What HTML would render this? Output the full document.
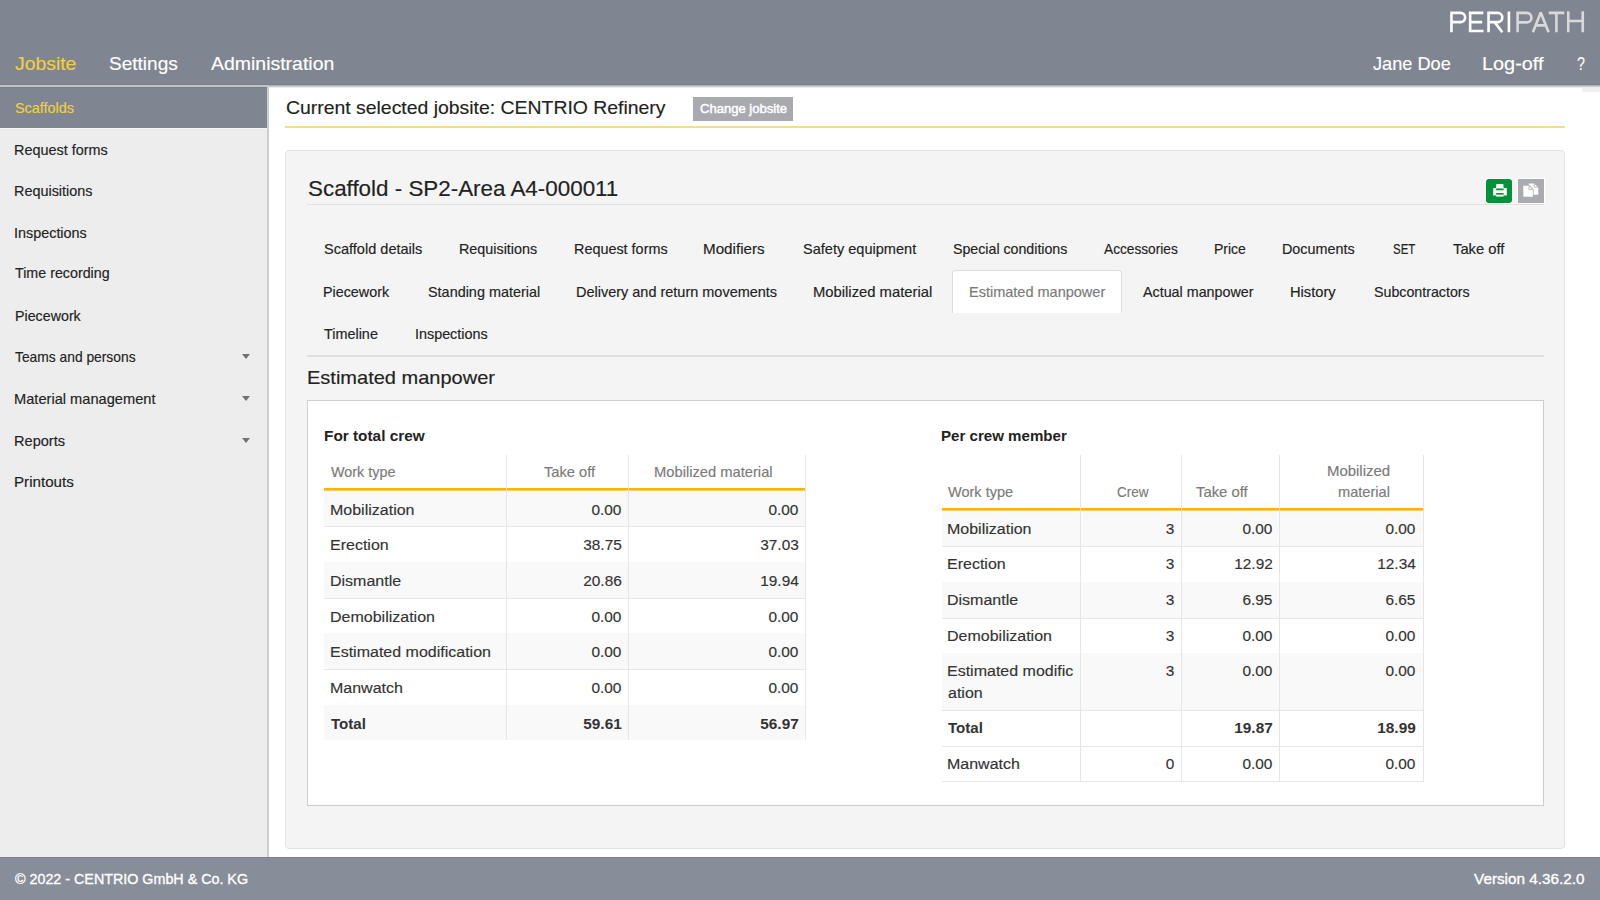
<!DOCTYPE html>
<html><head><meta charset="utf-8"><title>PERIPATH</title>
<style>
html,body{margin:0;padding:0;width:1600px;height:900px;overflow:hidden;background:#fff;}
body{position:relative;font-family:"Liberation Sans",sans-serif;}
.t{position:absolute;white-space:nowrap;-webkit-text-stroke:0.15px currentColor;}
.r{position:absolute;}
</style></head><body>
<div class="r" style="left:0px;top:0px;width:1600px;height:85px;background:#7f8692;"></div>
<div class="r" style="left:0px;top:84px;width:1600px;height:1px;background:#78808b;"></div>
<svg class="r" style="left:1440px;top:0px" width="160" height="45" viewBox="0 0 160 45">
<g fill="none" stroke-width="2.6" stroke-linejoin="miter" stroke-linecap="butt">
<path stroke="#ffffff" d="M11.45 32.3V12.9H20.5A4.6 4.6 0 0 1 20.5 22.1H11.45M43.3 12.9H30.15V31H43.5M30.15 22.1H42.2M48.55 32.3V12.9H57.7A4.6 4.6 0 0 1 57.7 22.1H48.55M54.6 22.1L62.3 32.3M68.9 11.6V32.3"/>
<path stroke="#d9d9db" d="M77.6 32.25V12.9H86.65A4.75 4.75 0 0 1 86.65 22.4H77.6M108.75 12.9H124.25M116.4 12.9V32.25M128.25 11.25V32.25M142.75 11.25V32.25M128.25 21H142.75M95.5 25.4H106"/>
<path stroke="#d9d9db" stroke-linejoin="bevel" d="M92.9 32.25L100.75 12.6L108.6 32.25"/>
</g></svg>
<div class="t" style="top:54.22px;font-size:19px;line-height:19px;color:#f2cf3d;left:15.00px;transform:scaleX(1.0196);transform-origin:0 0;">Jobsite</div>
<div class="t" style="top:54.22px;font-size:19px;line-height:19px;color:#ffffff;left:108.75px;transform:scaleX(1.0014);transform-origin:0 0;">Settings</div>
<div class="t" style="top:54.22px;font-size:19px;line-height:19px;color:#ffffff;left:210.60px;transform:scaleX(1.0241);transform-origin:0 0;">Administration</div>
<div class="t" style="top:54.22px;font-size:19px;line-height:19px;color:#ffffff;left:1372.75px;transform:scaleX(0.9564);transform-origin:0 0;">Jane Doe</div>
<div class="t" style="top:54.22px;font-size:19px;line-height:19px;color:#ffffff;left:1481.95px;transform:scaleX(1.0456);transform-origin:0 0;">Log-off</div>
<div class="t" style="top:54.22px;font-size:19px;line-height:19px;color:#ffffff;left:1576.70px;transform:scaleX(0.7500);transform-origin:0 0;">?</div>
<div class="r" style="left:0px;top:85px;width:267px;height:772px;background:#ededed;"></div>
<div class="r" style="left:0px;top:85px;width:269px;height:2px;background:#bfc2c7;"></div>
<div class="r" style="left:267px;top:87px;width:2px;height:770px;background:#cdcecf;"></div>
<div class="r" style="left:0px;top:87px;width:267px;height:41px;background:#7f8692;"></div>
<div class="r" style="left:0px;top:87px;width:267px;height:1px;background:#78808b;"></div>
<div class="r" style="left:0px;top:128px;width:267px;height:1px;background:#f6f6f6;"></div>
<div class="t" style="top:100.70px;font-size:14.3px;line-height:14.3px;color:#f2cf3d;left:15.40px;transform:scaleX(1.0086);transform-origin:0 0;">Scaffolds</div>
<div class="t" style="top:142.90px;font-size:14.3px;line-height:14.3px;color:#222222;left:14.49px;transform:scaleX(1.0074);transform-origin:0 0;">Request forms</div>
<div class="t" style="top:183.70px;font-size:14.3px;line-height:14.3px;color:#222222;left:14.49px;transform:scaleX(1.0074);transform-origin:0 0;">Requisitions</div>
<div class="t" style="top:225.50px;font-size:14.3px;line-height:14.3px;color:#222222;left:14.49px;transform:scaleX(1.0060);transform-origin:0 0;">Inspections</div>
<div class="t" style="top:266.40px;font-size:14.3px;line-height:14.3px;color:#222222;left:15.00px;transform:scaleX(0.9983);transform-origin:0 0;">Time recording</div>
<div class="t" style="top:308.70px;font-size:14.3px;line-height:14.3px;color:#222222;left:14.50px;transform:scaleX(0.9970);transform-origin:0 0;">Piecework</div>
<div class="t" style="top:349.80px;font-size:14.3px;line-height:14.3px;color:#222222;left:15.00px;transform:scaleX(0.9661);transform-origin:0 0;">Teams and persons</div>
<div class="r" style="left:242px;top:354.4px;width:0;height:0;border-left:4.3px solid transparent;border-right:4.3px solid transparent;border-top:5px solid #727272;"></div>
<div class="t" style="top:391.80px;font-size:14.3px;line-height:14.3px;color:#222222;left:14.48px;transform:scaleX(1.0233);transform-origin:0 0;">Material management</div>
<div class="r" style="left:242px;top:396.4px;width:0;height:0;border-left:4.3px solid transparent;border-right:4.3px solid transparent;border-top:5px solid #727272;"></div>
<div class="t" style="top:433.80px;font-size:14.3px;line-height:14.3px;color:#222222;left:14.48px;transform:scaleX(1.0202);transform-origin:0 0;">Reports</div>
<div class="r" style="left:242px;top:438.4px;width:0;height:0;border-left:4.3px solid transparent;border-right:4.3px solid transparent;border-top:5px solid #727272;"></div>
<div class="t" style="top:475.10px;font-size:14.3px;line-height:14.3px;color:#222222;left:14.44px;transform:scaleX(1.0602);transform-origin:0 0;">Printouts</div>
<div class="r" style="left:269px;top:85px;width:1331px;height:772px;background:#ffffff;"></div>
<div class="r" style="left:269px;top:85px;width:1331px;height:3px;background:linear-gradient(#9ea2a8,#d4d5d6 66%,#ffffff);"></div>
<div class="r" style="left:1582px;top:88px;width:18px;height:4px;background:#efefef;"></div>
<div class="t" style="top:97.52px;font-size:19px;line-height:19px;color:#222222;left:286.00px;transform:scaleX(1.0210);transform-origin:0 0;">Current selected jobsite: CENTRIO Refinery</div>
<div class="r" style="left:693px;top:97px;width:100px;height:24px;background:#a9aaaf;"></div>
<div class="t" style="top:102.76px;font-size:12.8px;line-height:12.8px;color:#ffffff;left:699.50px;transform:scaleX(1.0205);transform-origin:0 0;-webkit-text-stroke:0.45px #fff;">Change jobsite</div>
<div class="r" style="left:285px;top:126px;width:1280px;height:2px;background:#f5dc8c;"></div>
<div class="r" style="left:285px;top:150px;width:1280px;height:699px;background:#f4f4f4;border:1px solid #e2e2e2;border-radius:4px;box-sizing:border-box;"></div>
<div class="t" style="top:177.72px;font-size:21.6px;line-height:21.6px;color:#222222;left:307.70px;transform:scaleX(1.0368);transform-origin:0 0;">Scaffold - SP2-Area A4-000011</div>
<div class="r" style="left:307px;top:204px;width:1237px;height:1px;background:#e1e1e1;"></div>
<div class="r" style="left:1486px;top:179px;width:26px;height:24px;background:#009339;border-radius:3px;box-shadow:0 0 0 1px #ffffff;"></div>
<div class="r" style="left:1518px;top:179px;width:26px;height:24px;background:#aaabb0;box-shadow:0 0 0 1px #ffffff;"></div>
<svg class="r" style="left:1486px;top:179px" width="26" height="24" viewBox="0 0 26 24">
<path fill="#fff" d="M10.4 4.9H17.3L17.7 9.6H10Z"/>
<path fill="#fff" d="M7.2 9.1H10.1V11.2H17.6V9.1H20.8V16.5H17.6V13.9H10.1V16.5H7.2Z"/>
<path fill="#fff" d="M10.1 15.6H17.6V17.6H10.1Z"/>
</svg>
<svg class="r" style="left:1518px;top:179px" width="26" height="24" viewBox="0 0 26 24">
<path fill="#fff" d="M10.7 4.5H16L20.3 8.5V15.7H15.6V10.3L10.7 5.4Z"/>
<path fill="none" stroke="#b9b9be" stroke-width="0.9" d="M16.2 4.6V8.3H20.2"/>
<path fill="#fff" d="M5.3 6.7H10.7L14.8 10.7V17.7H5.3Z"/>
<path fill="none" stroke="#b9b9be" stroke-width="0.9" d="M10.9 6.8V10.5H14.7"/>
</svg>
<div class="t" style="top:242.28px;font-size:14.2px;line-height:14.2px;color:#222222;left:324.25px;transform:scaleX(1.0249);transform-origin:0 0;">Scaffold details</div>
<div class="t" style="top:242.28px;font-size:14.2px;line-height:14.2px;color:#222222;left:458.99px;transform:scaleX(1.0106);transform-origin:0 0;">Requisitions</div>
<div class="t" style="top:242.28px;font-size:14.2px;line-height:14.2px;color:#222222;left:573.99px;transform:scaleX(1.0147);transform-origin:0 0;">Request forms</div>
<div class="t" style="top:242.28px;font-size:14.2px;line-height:14.2px;color:#222222;left:703.43px;transform:scaleX(1.0716);transform-origin:0 0;">Modifiers</div>
<div class="t" style="top:242.28px;font-size:14.2px;line-height:14.2px;color:#222222;left:802.50px;transform:scaleX(1.0251);transform-origin:0 0;">Safety equipment</div>
<div class="t" style="top:242.28px;font-size:14.2px;line-height:14.2px;color:#222222;left:952.50px;transform:scaleX(0.9999);transform-origin:0 0;">Special conditions</div>
<div class="t" style="top:242.28px;font-size:14.2px;line-height:14.2px;color:#222222;left:1104.00px;transform:scaleX(0.9648);transform-origin:0 0;">Accessories</div>
<div class="t" style="top:242.28px;font-size:14.2px;line-height:14.2px;color:#222222;left:1214.01px;transform:scaleX(0.9862);transform-origin:0 0;">Price</div>
<div class="t" style="top:242.28px;font-size:14.2px;line-height:14.2px;color:#222222;left:1282.49px;transform:scaleX(1.0119);transform-origin:0 0;">Documents</div>
<div class="t" style="top:242.28px;font-size:14.2px;line-height:14.2px;color:#222222;left:1393.00px;transform:scaleX(0.8093);transform-origin:0 0;">SET</div>
<div class="t" style="top:242.28px;font-size:14.2px;line-height:14.2px;color:#222222;left:1453.30px;transform:scaleX(1.0407);transform-origin:0 0;">Take off</div>
<div class="r" style="left:952px;top:270px;width:170px;height:43px;background:#ffffff;border:1px solid #dcdcdc;border-bottom:none;border-radius:4px 4px 0 0;box-sizing:border-box;"></div>
<div class="t" style="top:284.98px;font-size:14.2px;line-height:14.2px;color:#222222;left:322.99px;transform:scaleX(1.0099);transform-origin:0 0;">Piecework</div>
<div class="t" style="top:284.98px;font-size:14.2px;line-height:14.2px;color:#222222;left:427.50px;transform:scaleX(1.0158);transform-origin:0 0;">Standing material</div>
<div class="t" style="top:284.98px;font-size:14.2px;line-height:14.2px;color:#222222;left:575.98px;transform:scaleX(1.0202);transform-origin:0 0;">Delivery and return movements</div>
<div class="t" style="top:284.98px;font-size:14.2px;line-height:14.2px;color:#222222;left:813.46px;transform:scaleX(1.0426);transform-origin:0 0;">Mobilized material</div>
<div class="t" style="top:284.98px;font-size:14.2px;line-height:14.2px;color:#222222;left:1142.90px;transform:scaleX(1.0083);transform-origin:0 0;">Actual manpower</div>
<div class="t" style="top:284.98px;font-size:14.2px;line-height:14.2px;color:#222222;left:1289.96px;transform:scaleX(1.0352);transform-origin:0 0;">History</div>
<div class="t" style="top:284.98px;font-size:14.2px;line-height:14.2px;color:#222222;left:1374.00px;transform:scaleX(1.0029);transform-origin:0 0;">Subcontractors</div>
<div class="t" style="top:284.98px;font-size:14.2px;line-height:14.2px;color:#7a7a7a;left:968.98px;transform:scaleX(1.0223);transform-origin:0 0;">Estimated manpower</div>
<div class="t" style="top:327.28px;font-size:14.2px;line-height:14.2px;color:#222222;left:324.00px;transform:scaleX(1.0151);transform-origin:0 0;">Timeline</div>
<div class="t" style="top:327.28px;font-size:14.2px;line-height:14.2px;color:#222222;left:414.99px;transform:scaleX(1.0117);transform-origin:0 0;">Inspections</div>
<div class="r" style="left:307px;top:355px;width:1237px;height:1.5px;background:#dedede;"></div>
<div class="t" style="top:369.26px;font-size:18.6px;line-height:18.6px;color:#222222;left:306.62px;transform:scaleX(1.0763);transform-origin:0 0;">Estimated manpower</div>
<div class="r" style="left:307px;top:400px;width:1237px;height:406px;background:#ffffff;border:1px solid #cdcdcd;box-sizing:border-box;"></div>
<div class="t" style="top:427.80px;font-size:15px;line-height:15px;color:#222222;font-weight:bold;-webkit-text-stroke:0;left:323.73px;transform:scaleX(1.0237);transform-origin:0 0;">For total crew</div>
<div class="r" style="left:324px;top:488px;width:482px;height:2px;background:#ffb400;"></div>
<div class="r" style="left:324px;top:490px;width:482px;height:1px;background:#ffcf59;"></div>
<div class="t" style="top:464.58px;font-size:14.2px;line-height:14.2px;color:#7a7a7a;left:331.20px;transform:scaleX(1.0124);transform-origin:0 0;">Work type</div>
<div class="t" style="top:464.58px;font-size:14.2px;line-height:14.2px;color:#7a7a7a;left:544.40px;transform:scaleX(1.0347);transform-origin:0 0;">Take off</div>
<div class="t" style="top:464.58px;font-size:14.2px;line-height:14.2px;color:#7a7a7a;left:653.96px;transform:scaleX(1.0373);transform-origin:0 0;">Mobilized material</div>
<div class="r" style="left:324px;top:491px;width:482px;height:35px;background:#f9f9f9;"></div>
<div class="r" style="left:324px;top:526px;width:482px;height:1px;background:#e6e6e6;"></div>
<div class="t" style="top:501.52px;font-size:15.1px;line-height:15.1px;color:#333333;left:329.94px;transform:scaleX(1.0600);transform-origin:0 0;">Mobilization</div>
<div class="t" style="top:501.52px;font-size:15.1px;line-height:15.1px;color:#333333;right:978.60px;text-align:right;transform:scaleX(1.0200);transform-origin:100% 0;">0.00</div>
<div class="t" style="top:501.52px;font-size:15.1px;line-height:15.1px;color:#333333;right:801.60px;text-align:right;transform:scaleX(1.0200);transform-origin:100% 0;">0.00</div>
<div class="r" style="left:324px;top:562px;width:482px;height:1px;background:#e6e6e6;"></div>
<div class="t" style="top:537.22px;font-size:15.1px;line-height:15.1px;color:#333333;left:329.94px;transform:scaleX(1.0600);transform-origin:0 0;">Erection</div>
<div class="t" style="top:537.22px;font-size:15.1px;line-height:15.1px;color:#333333;right:978.60px;text-align:right;transform:scaleX(1.0200);transform-origin:100% 0;">38.75</div>
<div class="t" style="top:537.22px;font-size:15.1px;line-height:15.1px;color:#333333;right:801.60px;text-align:right;transform:scaleX(1.0200);transform-origin:100% 0;">37.03</div>
<div class="r" style="left:324px;top:562px;width:482px;height:35.5px;background:#f9f9f9;"></div>
<div class="r" style="left:324px;top:597.5px;width:482px;height:1px;background:#e6e6e6;"></div>
<div class="t" style="top:573.22px;font-size:15.1px;line-height:15.1px;color:#333333;left:329.94px;transform:scaleX(1.0600);transform-origin:0 0;">Dismantle</div>
<div class="t" style="top:573.22px;font-size:15.1px;line-height:15.1px;color:#333333;right:978.60px;text-align:right;transform:scaleX(1.0200);transform-origin:100% 0;">20.86</div>
<div class="t" style="top:573.22px;font-size:15.1px;line-height:15.1px;color:#333333;right:801.60px;text-align:right;transform:scaleX(1.0200);transform-origin:100% 0;">19.94</div>
<div class="r" style="left:324px;top:633px;width:482px;height:1px;background:#e6e6e6;"></div>
<div class="t" style="top:608.72px;font-size:15.1px;line-height:15.1px;color:#333333;left:329.94px;transform:scaleX(1.0600);transform-origin:0 0;">Demobilization</div>
<div class="t" style="top:608.72px;font-size:15.1px;line-height:15.1px;color:#333333;right:978.60px;text-align:right;transform:scaleX(1.0200);transform-origin:100% 0;">0.00</div>
<div class="t" style="top:608.72px;font-size:15.1px;line-height:15.1px;color:#333333;right:801.60px;text-align:right;transform:scaleX(1.0200);transform-origin:100% 0;">0.00</div>
<div class="r" style="left:324px;top:633px;width:482px;height:36px;background:#f9f9f9;"></div>
<div class="r" style="left:324px;top:669px;width:482px;height:1px;background:#e6e6e6;"></div>
<div class="t" style="top:644.22px;font-size:15.1px;line-height:15.1px;color:#333333;left:329.94px;transform:scaleX(1.0600);transform-origin:0 0;">Estimated modification</div>
<div class="t" style="top:644.22px;font-size:15.1px;line-height:15.1px;color:#333333;right:978.60px;text-align:right;transform:scaleX(1.0200);transform-origin:100% 0;">0.00</div>
<div class="t" style="top:644.22px;font-size:15.1px;line-height:15.1px;color:#333333;right:801.60px;text-align:right;transform:scaleX(1.0200);transform-origin:100% 0;">0.00</div>
<div class="r" style="left:324px;top:705px;width:482px;height:1px;background:#e6e6e6;"></div>
<div class="t" style="top:680.22px;font-size:15.1px;line-height:15.1px;color:#333333;left:329.94px;transform:scaleX(1.0600);transform-origin:0 0;">Manwatch</div>
<div class="t" style="top:680.22px;font-size:15.1px;line-height:15.1px;color:#333333;right:978.60px;text-align:right;transform:scaleX(1.0200);transform-origin:100% 0;">0.00</div>
<div class="t" style="top:680.22px;font-size:15.1px;line-height:15.1px;color:#333333;right:801.60px;text-align:right;transform:scaleX(1.0200);transform-origin:100% 0;">0.00</div>
<div class="r" style="left:324px;top:705px;width:482px;height:35px;background:#f9f9f9;"></div>
<div class="t" style="top:716.22px;font-size:15.1px;line-height:15.1px;color:#333333;font-weight:bold;-webkit-text-stroke:0;left:331.00px;">Total</div>
<div class="t" style="top:716.22px;font-size:15.1px;line-height:15.1px;color:#333333;font-weight:bold;-webkit-text-stroke:0;right:978.60px;text-align:right;transform:scaleX(1.0200);transform-origin:100% 0;">59.61</div>
<div class="t" style="top:716.22px;font-size:15.1px;line-height:15.1px;color:#333333;font-weight:bold;-webkit-text-stroke:0;right:801.60px;text-align:right;transform:scaleX(1.0200);transform-origin:100% 0;">56.97</div>
<div class="r" style="left:506px;top:455px;width:1px;height:285px;background:#e6e6e6;"></div>
<div class="r" style="left:628px;top:455px;width:1px;height:285px;background:#e6e6e6;"></div>
<div class="r" style="left:805px;top:455px;width:1px;height:285px;background:#e6e6e6;"></div>
<div class="t" style="top:428.10px;font-size:15px;line-height:15px;color:#222222;font-weight:bold;-webkit-text-stroke:0;left:941.19px;transform:scaleX(1.0062);transform-origin:0 0;">Per crew member</div>
<div class="r" style="left:942px;top:508px;width:481px;height:2px;background:#ffb400;"></div>
<div class="r" style="left:942px;top:510px;width:481px;height:1px;background:#ffcf59;"></div>
<div class="t" style="top:484.98px;font-size:14.2px;line-height:14.2px;color:#7a7a7a;left:948.00px;transform:scaleX(1.0234);transform-origin:0 0;">Work type</div>
<div class="t" style="top:484.98px;font-size:14.2px;line-height:14.2px;color:#7a7a7a;left:1116.50px;transform:scaleX(0.9480);transform-origin:0 0;">Crew</div>
<div class="t" style="top:484.98px;font-size:14.2px;line-height:14.2px;color:#7a7a7a;left:1195.60px;transform:scaleX(1.0448);transform-origin:0 0;">Take off</div>
<div class="t" style="top:464.38px;font-size:14.2px;line-height:14.2px;color:#7a7a7a;left:1327.25px;transform:scaleX(1.0527);transform-origin:0 0;">Mobilized</div>
<div class="t" style="top:484.98px;font-size:14.2px;line-height:14.2px;color:#7a7a7a;left:1337.60px;transform:scaleX(1.0297);transform-origin:0 0;">material</div>
<div class="r" style="left:942px;top:511px;width:481px;height:35px;background:#f9f9f9;"></div>
<div class="r" style="left:942px;top:546px;width:481px;height:1px;background:#e6e6e6;"></div>
<div class="t" style="top:521.22px;font-size:15.1px;line-height:15.1px;color:#333333;left:946.94px;transform:scaleX(1.0600);transform-origin:0 0;">Mobilization</div>
<div class="t" style="top:521.22px;font-size:15.1px;line-height:15.1px;color:#333333;right:425.80px;text-align:right;transform:scaleX(1.0200);transform-origin:100% 0;">3</div>
<div class="t" style="top:521.22px;font-size:15.1px;line-height:15.1px;color:#333333;right:327.60px;text-align:right;transform:scaleX(1.0200);transform-origin:100% 0;">0.00</div>
<div class="t" style="top:521.22px;font-size:15.1px;line-height:15.1px;color:#333333;right:184.60px;text-align:right;transform:scaleX(1.0200);transform-origin:100% 0;">0.00</div>
<div class="r" style="left:942px;top:582px;width:481px;height:1px;background:#e6e6e6;"></div>
<div class="t" style="top:556.22px;font-size:15.1px;line-height:15.1px;color:#333333;left:946.94px;transform:scaleX(1.0600);transform-origin:0 0;">Erection</div>
<div class="t" style="top:556.22px;font-size:15.1px;line-height:15.1px;color:#333333;right:425.80px;text-align:right;transform:scaleX(1.0200);transform-origin:100% 0;">3</div>
<div class="t" style="top:556.22px;font-size:15.1px;line-height:15.1px;color:#333333;right:327.60px;text-align:right;transform:scaleX(1.0200);transform-origin:100% 0;">12.92</div>
<div class="t" style="top:556.22px;font-size:15.1px;line-height:15.1px;color:#333333;right:184.60px;text-align:right;transform:scaleX(1.0200);transform-origin:100% 0;">12.34</div>
<div class="r" style="left:942px;top:582px;width:481px;height:35.5px;background:#f9f9f9;"></div>
<div class="r" style="left:942px;top:617.5px;width:481px;height:1px;background:#e6e6e6;"></div>
<div class="t" style="top:592.22px;font-size:15.1px;line-height:15.1px;color:#333333;left:946.94px;transform:scaleX(1.0600);transform-origin:0 0;">Dismantle</div>
<div class="t" style="top:592.22px;font-size:15.1px;line-height:15.1px;color:#333333;right:425.80px;text-align:right;transform:scaleX(1.0200);transform-origin:100% 0;">3</div>
<div class="t" style="top:592.22px;font-size:15.1px;line-height:15.1px;color:#333333;right:327.60px;text-align:right;transform:scaleX(1.0200);transform-origin:100% 0;">6.95</div>
<div class="t" style="top:592.22px;font-size:15.1px;line-height:15.1px;color:#333333;right:184.60px;text-align:right;transform:scaleX(1.0200);transform-origin:100% 0;">6.65</div>
<div class="r" style="left:942px;top:653px;width:481px;height:1px;background:#e6e6e6;"></div>
<div class="t" style="top:627.72px;font-size:15.1px;line-height:15.1px;color:#333333;left:946.94px;transform:scaleX(1.0600);transform-origin:0 0;">Demobilization</div>
<div class="t" style="top:627.72px;font-size:15.1px;line-height:15.1px;color:#333333;right:425.80px;text-align:right;transform:scaleX(1.0200);transform-origin:100% 0;">3</div>
<div class="t" style="top:627.72px;font-size:15.1px;line-height:15.1px;color:#333333;right:327.60px;text-align:right;transform:scaleX(1.0200);transform-origin:100% 0;">0.00</div>
<div class="t" style="top:627.72px;font-size:15.1px;line-height:15.1px;color:#333333;right:184.60px;text-align:right;transform:scaleX(1.0200);transform-origin:100% 0;">0.00</div>
<div class="r" style="left:942px;top:653px;width:481px;height:57px;background:#f9f9f9;"></div>
<div class="r" style="left:942px;top:710px;width:481px;height:1px;background:#e6e6e6;"></div>
<div class="t" style="top:663.22px;font-size:15.1px;line-height:15.1px;color:#333333;left:946.94px;transform:scaleX(1.0600);transform-origin:0 0;">Estimated modific</div>
<div class="t" style="top:684.72px;font-size:15.1px;line-height:15.1px;color:#333333;left:948.00px;transform:scaleX(1.0600);transform-origin:0 0;">ation</div>
<div class="t" style="top:663.22px;font-size:15.1px;line-height:15.1px;color:#333333;right:425.80px;text-align:right;transform:scaleX(1.0200);transform-origin:100% 0;">3</div>
<div class="t" style="top:663.22px;font-size:15.1px;line-height:15.1px;color:#333333;right:327.60px;text-align:right;transform:scaleX(1.0200);transform-origin:100% 0;">0.00</div>
<div class="t" style="top:663.22px;font-size:15.1px;line-height:15.1px;color:#333333;right:184.60px;text-align:right;transform:scaleX(1.0200);transform-origin:100% 0;">0.00</div>
<div class="r" style="left:942px;top:746px;width:481px;height:1px;background:#e6e6e6;"></div>
<div class="t" style="top:720.22px;font-size:15.1px;line-height:15.1px;color:#333333;font-weight:bold;-webkit-text-stroke:0;left:948.00px;">Total</div>
<div class="t" style="top:720.22px;font-size:15.1px;line-height:15.1px;color:#333333;font-weight:bold;-webkit-text-stroke:0;right:327.60px;text-align:right;transform:scaleX(1.0200);transform-origin:100% 0;">19.87</div>
<div class="t" style="top:720.22px;font-size:15.1px;line-height:15.1px;color:#333333;font-weight:bold;-webkit-text-stroke:0;right:184.60px;text-align:right;transform:scaleX(1.0200);transform-origin:100% 0;">18.99</div>
<div class="r" style="left:942px;top:781px;width:481px;height:1px;background:#e6e6e6;"></div>
<div class="t" style="top:756.22px;font-size:15.1px;line-height:15.1px;color:#333333;left:946.94px;transform:scaleX(1.0600);transform-origin:0 0;">Manwatch</div>
<div class="t" style="top:756.22px;font-size:15.1px;line-height:15.1px;color:#333333;right:425.80px;text-align:right;transform:scaleX(1.0200);transform-origin:100% 0;">0</div>
<div class="t" style="top:756.22px;font-size:15.1px;line-height:15.1px;color:#333333;right:327.60px;text-align:right;transform:scaleX(1.0200);transform-origin:100% 0;">0.00</div>
<div class="t" style="top:756.22px;font-size:15.1px;line-height:15.1px;color:#333333;right:184.60px;text-align:right;transform:scaleX(1.0200);transform-origin:100% 0;">0.00</div>
<div class="r" style="left:1080px;top:455px;width:1px;height:327px;background:#e6e6e6;"></div>
<div class="r" style="left:1181px;top:455px;width:1px;height:327px;background:#e6e6e6;"></div>
<div class="r" style="left:1279px;top:455px;width:1px;height:327px;background:#e6e6e6;"></div>
<div class="r" style="left:1423px;top:455px;width:1px;height:327px;background:#e6e6e6;"></div>
<div class="r" style="left:0px;top:857px;width:1600px;height:43px;background:#878d99;"></div>
<div class="r" style="left:0px;top:857px;width:1600px;height:1px;background:#7b8190;"></div>
<div class="t" style="top:871.00px;font-size:15px;line-height:15px;color:#ffffff;left:15.40px;transform:scaleX(0.9533);transform-origin:0 0;-webkit-text-stroke:0.35px #fff;">&copy; 2022 - CENTRIO GmbH &amp; Co. KG</div>
<div class="t" style="top:871.00px;font-size:15px;line-height:15px;color:#ffffff;right:15.35px;text-align:right;transform:scaleX(1.0179);transform-origin:100% 0;-webkit-text-stroke:0.35px #fff;">Version 4.36.2.0</div>
</body></html>
